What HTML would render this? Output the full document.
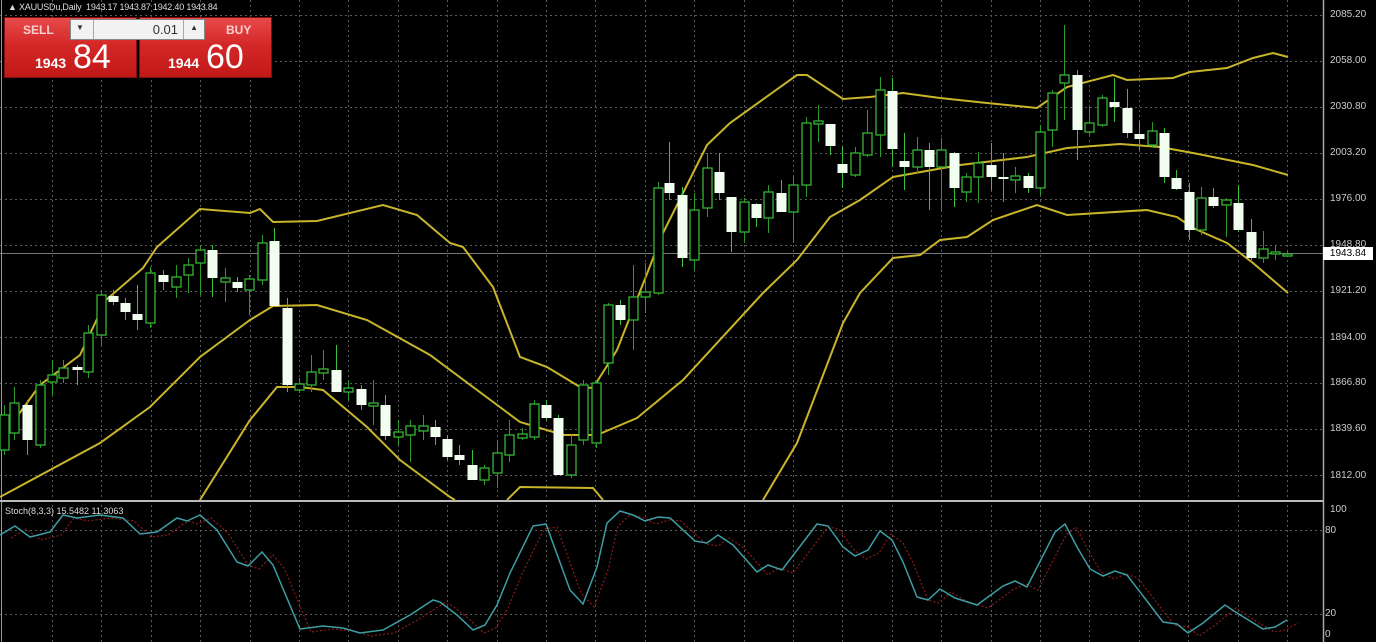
<!DOCTYPE html>
<html><head><meta charset="utf-8"><style>
html,body{margin:0;padding:0;background:#000;width:1376px;height:642px;overflow:hidden;font-family:"Liberation Sans",sans-serif}
#c{position:absolute;left:0;top:0}
.hdr{position:absolute;left:8px;top:2px;font-size:9px;color:#ddd;white-space:nowrap;letter-spacing:-0.2px}
.panel{position:absolute;top:17px;height:61px;width:133px;background:linear-gradient(#e84a4a 0%,#d42828 45%,#c21818 100%);border:1px solid #801010;box-sizing:border-box}
.lbl{position:absolute;top:5px;font-size:12px;font-weight:bold;color:#fbd0d0}
.small{position:absolute;bottom:6px;font-size:14px;font-weight:bold;color:#fff}
.big{position:absolute;bottom:0px;font-size:34px;color:#fff;line-height:40px}
.lot{position:absolute;left:70px;top:19px;width:135px;height:21px;background:#f2f2f2;border:1px solid #888;box-sizing:border-box;font-size:13px;color:#333}
.ax{position:absolute;left:1330px;font-size:10px;color:#ccc;line-height:10px}
</style></head><body>
<svg id="c" width="1376" height="642" xmlns="http://www.w3.org/2000/svg"></svg>
<div class="hdr">&#9650; XAUUSDu,Daily&nbsp; 1943.17 1943.87 1942.40 1943.84</div>
<div class="panel" style="left:4px"><span class="lbl" style="left:18px">SELL</span><span class="small" style="left:30px">1943</span><span class="big" style="left:68px">84</span></div>
<div class="panel" style="left:139px"><span class="lbl" style="left:86px">BUY</span><span class="small" style="left:28px">1944</span><span class="big" style="left:66px">60</span></div>
<div class="lot"><span style="position:absolute;left:5px;top:3px;font-size:8px">&#9660;</span><span style="position:absolute;left:22px;top:0;width:1px;height:19px;background:#aaa"></span><span style="position:absolute;right:26px;top:2px">0.01</span><span style="position:absolute;right:20px;top:0;width:1px;height:19px;background:#aaa"></span><span style="position:absolute;right:6px;top:3px;font-size:8px">&#9650;</span></div>
<div class="ax" style="top:10px">2085.20</div>
<div class="ax" style="top:56px">2058.00</div>
<div class="ax" style="top:102px">2030.80</div>
<div class="ax" style="top:148px">2003.20</div>
<div class="ax" style="top:194px">1976.00</div>
<div class="ax" style="top:240px">1948.80</div>
<div class="ax" style="top:286px">1921.20</div>
<div class="ax" style="top:333px">1894.00</div>
<div class="ax" style="top:378px">1866.80</div>
<div class="ax" style="top:424px">1839.60</div>
<div class="ax" style="top:471px">1812.00</div>
<div class="ax" style="top:505px">100</div>
<div class="ax" style="top:526px;left:1325px">80</div>
<div class="ax" style="top:609px;left:1325px">20</div>
<div class="ax" style="top:630px;left:1325px">0</div>
<div style="position:absolute;left:1323px;top:247px;width:50px;height:13px;background:#fff;color:#000;font-size:10px;line-height:13px;text-align:center">1943.84</div>
<div style="position:absolute;left:5px;top:506px;font-size:9px;color:#ddd">Stoch(8,3,3) 15.5482 11.3063</div>
<script>
var s='';
function L(x1,y1,x2,y2,c,w,d){s+='<line x1="'+x1+'" y1="'+y1+'" x2="'+x2+'" y2="'+y2+'" stroke="'+c+'" stroke-width="'+w+'"'+(d?' stroke-dasharray="'+d+'"':'')+'/>';}
for(var k=0;k<26;k++){var x=Math.round(52+49.4*k)+.5;L(x,0,x,642,'#5a5a5a',1,'2,3');}
for(var k=0;k<11;k++){var y=15+46*k+.5;L(0,y,1323,y,'#5a5a5a',1,'2,3');}
L(0,530.5,1323,530.5,'#5a5a5a',1,'2,3');L(0,614.5,1323,614.5,'#5a5a5a',1,'2,3');
L(0,253.5,1323,253.5,'#777',1);
L(1.5,0,1.5,642,'#999',1);L(1323.5,0,1323.5,642,'#aaa',1.5);L(0,501,1323,501,'#bbb',2);
function P(a,c,w,d){s+='<polyline fill="none" stroke="'+c+'" stroke-width="'+w+'"'+(d?' stroke-dasharray="'+d+'"':'')+' points="'+a.join(' ')+'"/>';}
var Y='#c9b52a';
P(['0,440','40,385','80,355','106,300','143,268','157,247','200,209','250,213','260,209','273,222','317,221','383,205','417,215','450,243','463,247','493,287','520,357','547,367','580,387','593,388','617,350','663,233','707,145','730,123','797,75','807,75','843,99','870,97','903,93','940,98','987,103','1037,108','1067,87','1113,75','1127,80','1173,78','1190,72','1227,68','1253,58','1273,53','1288,57'],Y,2);
P(['0,497','100,443','150,407','200,357','250,320','273,306','317,305','367,320','430,355','520,422','563,435','597,435','637,418','683,380','763,293','797,260','830,217','860,200','893,177','960,165','1027,157','1067,148','1120,144','1160,147','1193,153','1253,165','1288,175'],Y,2);
P(['200,500','250,420','277,387','300,387','323,390','367,427','400,460','450,497','455,500'],Y,2);
P(['507,500','520,487','593,488','603,500'],Y,2);
P(['763,500','797,443','843,323','860,293','893,258','920,255','940,240','967,237','993,220','1037,205','1067,215','1147,210','1177,217','1193,228','1227,243','1253,263','1288,293'],Y,2);
var C=[[4,415,450,405,455,1],[14,403,433,387,440,1],[27,405,440,400,455,0],[40,385,445,380,448,1],[52,375,382,360,395,1],[63,368,378,360,383,1],[77,367,370,365,385,0],[88,333,372,325,378,1],[101,295,335,290,345,1],[113,296,302,290,305,0],[125,303,312,298,320,0],[137,314,320,285,330,0],[150,273,323,267,328,1],[163,275,282,270,290,0],[176,277,287,265,298,1],[188,265,275,258,293,1],[200,250,263,245,295,1],[212,250,278,245,297,0],[225,278,282,268,302,1],[237,282,288,277,292,0],[249,279,290,275,315,1],[262,243,280,235,285,1],[274,241,306,228,306,0],[287,308,385,298,392,0],[299,384,390,378,393,1],[311,372,385,355,392,1],[323,369,373,350,380,1],[336,370,392,345,392,0],[348,388,392,380,400,1],[361,389,405,385,410,0],[373,403,406,380,425,1],[385,405,436,395,440,0],[398,432,437,420,445,1],[410,426,435,420,462,1],[423,426,431,415,440,1],[435,427,437,420,445,0],[447,439,457,435,460,0],[459,455,460,445,465,0],[472,465,480,450,480,0],[484,468,480,465,485,1],[497,453,473,440,488,1],[509,435,455,420,462,1],[522,434,438,428,440,1],[534,404,437,400,440,1],[546,405,418,400,420,0],[558,418,475,415,475,0],[571,445,475,435,478,1],[583,385,440,380,445,1],[596,383,443,380,448,1],[608,305,363,303,375,1],[620,305,320,300,325,0],[633,297,320,265,350,1],[645,292,297,263,313,1],[658,188,293,182,295,1],[669,183,193,142,200,0],[682,195,258,187,267,0],[694,210,260,193,270,1],[707,168,208,153,217,1],[719,172,193,153,200,0],[731,197,232,197,252,0],[744,202,232,198,243,1],[756,204,218,203,227,0],[768,192,218,185,233,1],[781,193,212,180,212,0],[793,185,212,177,243,1],[806,123,185,117,197,1],[818,121,124,105,142,1],[830,124,146,124,155,0],[842,164,173,147,188,0],[855,153,175,147,177,1],[867,133,155,110,157,1],[880,90,135,77,157,1],[892,91,149,78,167,0],[904,161,167,133,190,0],[917,150,167,137,173,1],[929,150,167,143,210,0],[941,150,167,138,210,1],[954,153,188,152,207,0],[966,177,192,173,202,1],[978,163,177,152,203,1],[991,165,177,143,190,0],[1003,177,179,153,202,0],[1015,176,180,167,193,1],[1028,176,188,173,193,0],[1040,132,188,125,195,1],[1052,93,130,90,147,1],[1064,75,83,25,120,1],[1077,75,130,70,160,0],[1089,123,132,107,135,1],[1102,98,125,95,127,1],[1114,102,107,78,122,0],[1127,108,133,89,138,0],[1139,134,139,122,150,0],[1152,131,145,122,148,1],[1164,133,177,128,183,0],[1176,178,189,170,190,0],[1189,192,230,183,240,0],[1201,198,230,187,235,1],[1213,197,206,188,208,0],[1226,200,205,198,237,1],[1238,203,230,185,232,0],[1251,232,258,219,260,0],[1263,249,258,231,263,1],[1275,252,254,245,260,1],[1287,254,255,251,257,1]];
C.forEach(function(c){var x=c[0],g=c[5];var col=g?'#2fae2f':'#eaffea';
L(x+.5,c[3],x+.5,c[4],g?'#2a9a2a':'#3fbf3f',1);
var h=Math.max(c[2]-c[1],2);
if(g)s+='<rect x="'+(x-4)+'" y="'+c[1]+'" width="9" height="'+h+'" fill="#000" stroke="#35b535" stroke-width="1.3"/>';
else s+='<rect x="'+(x-4.5)+'" y="'+c[1]+'" width="10" height="'+h+'" fill="#f2fff0"/>';});
var M=[[0,535],[15,526],[30,537],[50,532],[63,515],[77,518],[100,515],[123,518],[140,534],[157,532],[177,518],[187,521],[200,515],[217,530],[237,562],[248,566],[262,552],[273,565],[300,629],[323,626],[343,628],[360,633],[383,630],[410,615],[433,600],[440,602],[457,615],[473,630],[485,625],[497,605],[510,573],[533,526],[546,524],[570,590],[583,604],[597,567],[607,523],[620,511],[633,515],[645,521],[658,517],[670,518],[695,541],[707,543],[718,535],[733,545],[757,572],[768,565],[782,570],[817,524],[828,526],[843,547],[855,556],[868,550],[880,531],[892,540],[903,562],[917,597],[928,600],[940,589],[955,598],[977,605],[1003,586],[1015,581],[1027,587],[1055,532],[1065,524],[1077,547],[1090,569],[1103,576],[1115,571],[1127,575],[1163,622],[1177,624],[1188,633],[1203,623],[1225,605],[1237,613],[1263,629],[1275,627],[1287,620]];
P(M.map(function(p){return (p[0]+11)+','+(p[1]+3)}),'#8a1c1c',1.2,'2,2');
P(M.map(function(p){return p[0]+','+p[1]}),'#3e9ea6',1.5);
document.getElementById('c').innerHTML=s;
</script>
</body></html>
